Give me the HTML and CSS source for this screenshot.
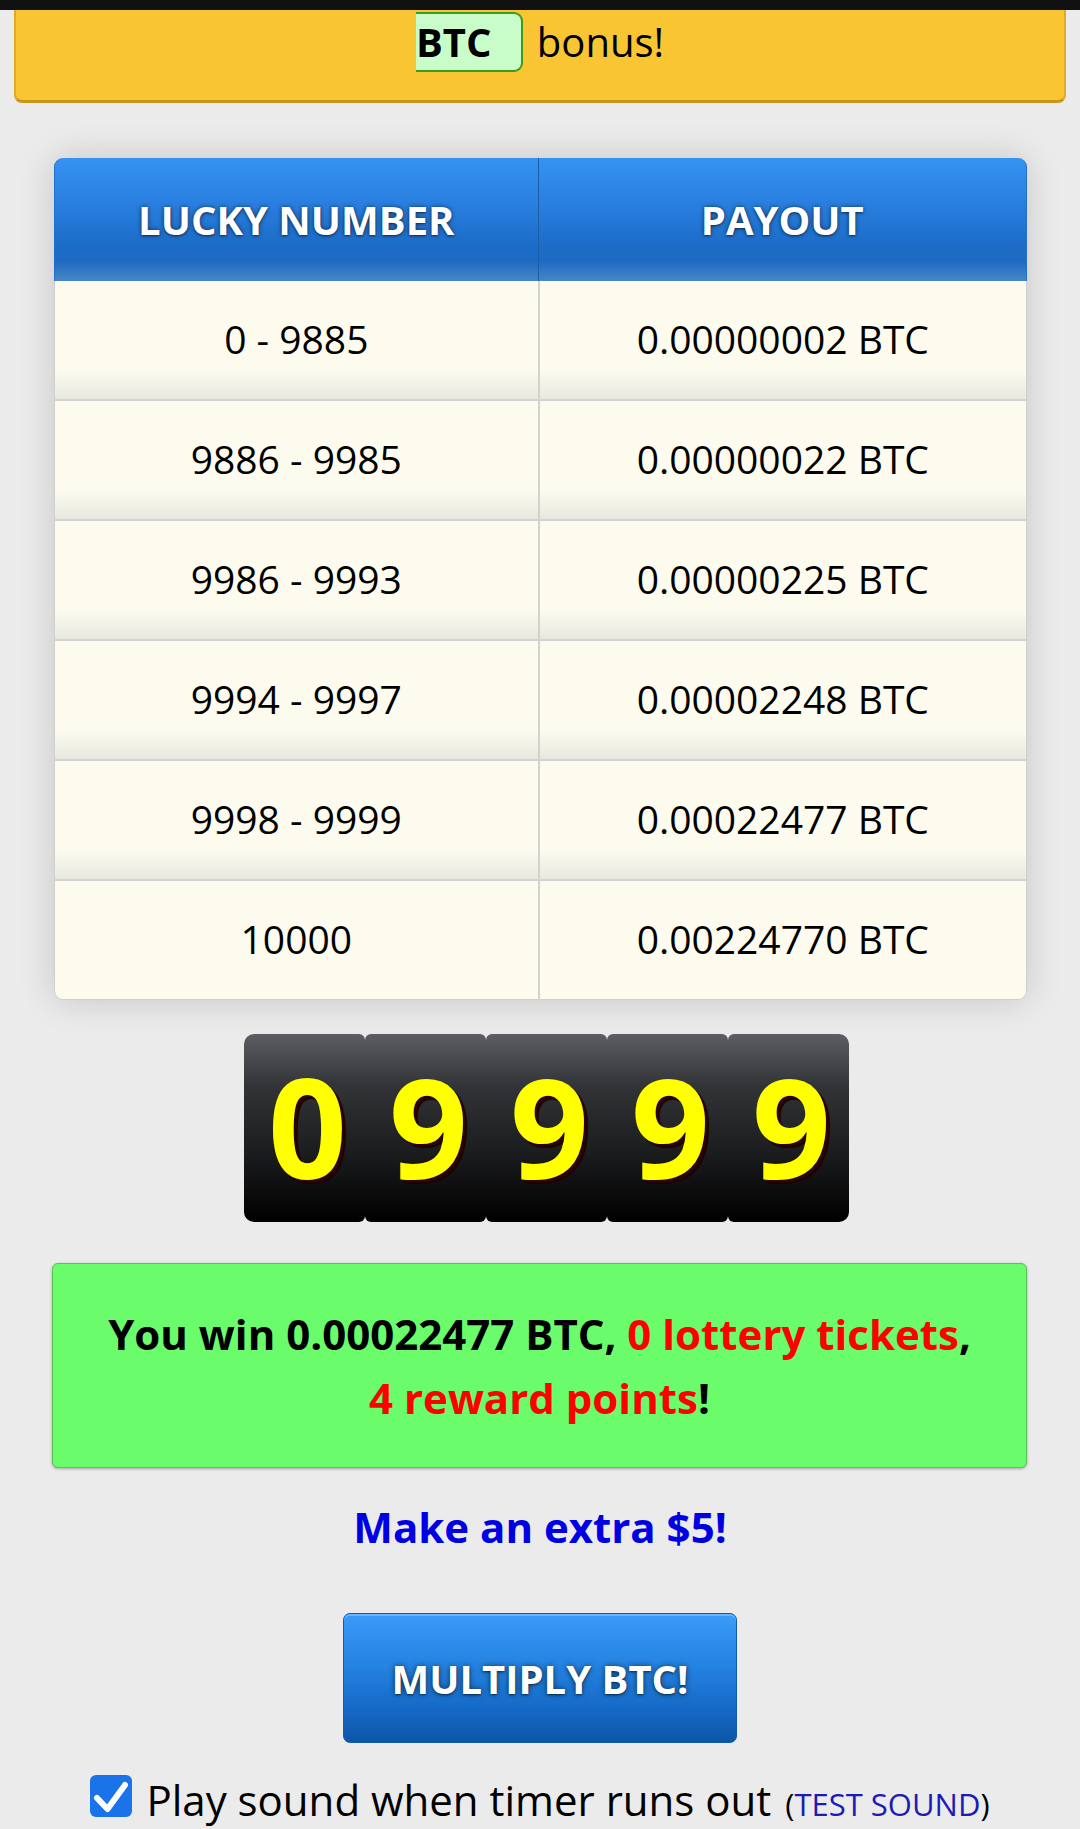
FILE: index.html
```html
<!DOCTYPE html>
<html lang="en">
<head>
  <meta charset="UTF-8">
  <meta name="viewport" content="width=device-width, initial-scale=1.0">
  <title>Free BTC – Roll</title>
  <link rel="stylesheet" href="styles.css">
</head>
<body>
  <div class="statusbar"></div>

  <!-- bonus banner -->
  <div class="bonus-bar"><span class="btc-pill">BTC</span> bonus!</div>

  <main class="roll">
    <table class="payout">
      <thead>
        <tr><th>LUCKY NUMBER</th><th>PAYOUT</th></tr>
      </thead>
      <tbody>
        <tr><td>0 - 9885</td><td>0.00000002 BTC</td></tr>
        <tr><td>9886 - 9985</td><td>0.00000022 BTC</td></tr>
        <tr><td>9986 - 9993</td><td>0.00000225 BTC</td></tr>
        <tr><td>9994 - 9997</td><td>0.00002248 BTC</td></tr>
        <tr><td>9998 - 9999</td><td>0.00022477 BTC</td></tr>
        <tr><td>10000</td><td>0.00224770 BTC</td></tr>
      </tbody>
    </table>

    <!-- rolled number -->
    <div class="counter">
      <span class="digit">0</span>
      <span class="digit">9</span>
      <span class="digit">9</span>
      <span class="digit">9</span>
      <span class="digit">9</span>
    </div>

    <div class="win-box">
      You win 0.00022477 BTC, <span class="hl">0 lottery tickets</span>, <span class="hl">4 reward points</span>!
    </div>

    <a class="extra" href="#">Make an extra $5!</a>

    <button class="multiply" type="button">MULTIPLY BTC!</button>

    <label class="sound">
      <span class="check">
        <svg viewBox="0 0 42 42" aria-hidden="true">
          <path d="M7 23 L17.5 34 L35 10"/>
        </svg>
      </span>
      <span>Play sound when timer runs out</span>
      <span class="test">(<a href="#">TEST SOUND</a>)</span>
    </label>
  </main>
</body>
</html>
```

FILE: styles.css
```css
:root {
  --bg:#ebebeb;
  --cream:#fcfbee;
}
*{box-sizing:border-box;margin:0;padding:0}
body{
  background:var(--bg);
  font-family:'Open Sans',sans-serif;color:#000;
}

.statusbar{height:10px;background:#111}

/* bonus banner */
.bonus-bar{
  margin:0 14px 0 14px;padding:2px 0 28px;
  background:#f9c532;border:2px solid #e0aa26;border-top:none;border-bottom:3px solid #c8951f;
  border-radius:0 0 8px 8px;
  text-align:center;font-size:40px;line-height:60px;
}
.btc-pill{
  display:inline-block;line-height:56px;font-weight:700;
  padding:0 30px 0 0;margin-right:3px;
  background:#c8fcc8;border:2px solid #3c9a1c;border-left:none;border-radius:0 9px 9px 0;
}

.roll{display:flex;flex-direction:column;align-items:center}

/* payout table */
.payout{
  width:973px;margin:55px 0 0 1px;
  border-collapse:separate;border-spacing:0;
  border-radius:9px;box-shadow:0 0 36px rgba(0,0,0,.16);
  font-size:39px;text-align:center;
}
.payout th{
  height:123px;
  color:#fff;font-size:40px;font-weight:700;
  text-shadow:0 0 5px rgba(0,0,0,.55),0 1px 2px rgba(0,0,0,.4);
  background:linear-gradient(#3593f1 0%,#2a80e1 35%,#1c6cc8 72%,#1e6bc3 84%,#4887c6 100%);
}
.payout th:first-child{width:49.7%;border-radius:9px 0 0 0;border-left:1px solid #2170c8}
.payout th:last-child{border-radius:0 9px 0 0;border-left:1px solid #1a5da8;border-right:1px solid #2170c8}
.payout td{
  height:120px;padding-bottom:4px;font-weight:400;
  background:linear-gradient(var(--cream) 0,var(--cream) 76%,#e9e8df 100%);
  border-bottom:2px solid #d2d2d0;
}
.payout td:first-child{border-left:1px solid #cfcfcf}
.payout td:last-child{border-left:2px solid #d2d2d0;border-right:1px solid #cfcfcf}
.payout tr:last-child td{height:119px;background:var(--cream);border-bottom:1px solid #cfcfcf}
.payout tr:last-child td:first-child{border-radius:0 0 0 9px}
.payout tr:last-child td:last-child{border-radius:0 0 9px 0}

/* rolled number */
.counter{display:flex;margin-top:34px;padding-left:13px}
.digit{
  width:121px;height:188px;border-radius:6px;
  display:flex;align-items:center;justify-content:center;
  background:linear-gradient(#5d5e63 0%,#323336 28%,#1c1d1f 62%,#000 100%);
  color:#ff0;font-size:138px;font-weight:700;line-height:1;padding-bottom:6px;padding-left:6px;
  text-shadow:3px 3px 0 #2a0303,4px 4px 1px #1a0000;
}
.digit:first-child{border-radius:10px 6px 6px 10px}
.digit:last-child{border-radius:6px 10px 10px 6px}

/* result */
.win-box{
  width:975px;margin:41px 0 0 -1px;padding:38px 50px 37px;
  background:#6afc6a;border:1px solid #58c458;border-radius:6px;
  box-shadow:0 1px 3px rgba(0,0,0,.3);
  text-align:center;font-size:42px;font-weight:700;line-height:64px;
}
.win-box .hl{color:#f00}

.extra{
  margin-top:30px;
  color:#0000e4;font-size:42px;font-weight:700;text-decoration:none;
}

.multiply{
  width:394px;height:130px;margin-top:58px;
  border:1px solid #0e5cae;border-radius:7px;
  background:linear-gradient(#3a9bf9 0%,#2583e2 40%,#1569c6 75%,#0b56a6 100%);
  box-shadow:inset 0 2px 0 rgba(255,255,255,.25);
  color:#fff;font-family:'Open Sans',sans-serif;font-size:40px;font-weight:700;
  text-shadow:0 0 6px rgba(0,0,0,.55),0 1px 2px rgba(0,0,0,.5);
  cursor:pointer;
}

/* sound option */
.sound{
  display:flex;align-items:baseline;margin-top:28px;
  font-size:42px;cursor:pointer;
}
.check{
  align-self:center;
  width:42px;height:42px;margin:0 14px 7px 0;border-radius:6px;background:#1a73e8;
  display:inline-flex;
}
.check svg{width:42px;height:42px;fill:none;stroke:#fff;stroke-width:6;stroke-linecap:round;stroke-linejoin:round}
.test{font-size:31px;margin-left:14px}
.test a{color:#1c1cb4;text-decoration:none}
```
